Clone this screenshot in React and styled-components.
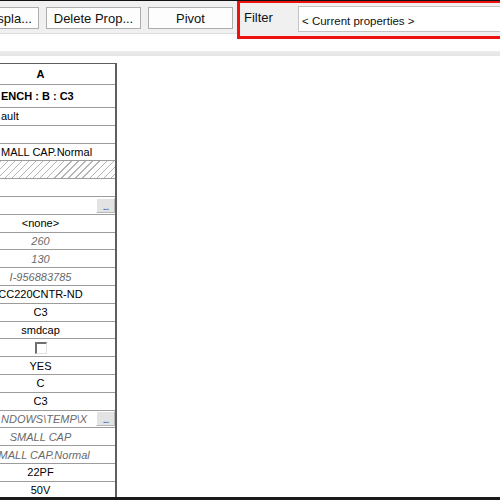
import React from 'react';
import styled, { createGlobalStyle } from 'styled-components';

const GlobalStyle = createGlobalStyle`
  html, body {
    margin: 0;
    padding: 0;
    background: #fff;
    overflow: hidden;
  }
  body {
    font-family: "Liberation Sans", Arial, sans-serif;
  }
`;

const Page = styled.div`
  width: 500px;
  height: 500px;
  box-sizing: border-box;
  border-top: 1px solid #111;
  border-bottom: 3px solid #1a1a1a;
  background: #fff;
  overflow: hidden;
  display: flex;
  flex-direction: column;
`;

const Toolbar = styled.div`
  height: 32px;
  flex-shrink: 0;
  display: flex;
  align-items: flex-start;
  gap: 7px;
  background: #f0f0f0;
  border-bottom: 1px solid #dedede;
`;

const ToolButton = styled.button`
  width: ${(p) => p.$width}px;
  margin-left: ${(p) => p.$offset || 0}px;
  height: 22px;
  margin-top: 6px;
  flex-shrink: 0;
  padding: 0;
  background: #fdfdfd;
  border: 1px solid #adadad;
  font-family: "Liberation Sans", Arial, sans-serif;
  font-size: 13px;
  color: #111;
  white-space: nowrap;
  overflow: hidden;
`;

const FilterGroup = styled.div`
  margin-left: -3px;
  flex: 1;
  height: 38px;
  box-sizing: border-box;
  border: 3px solid #f01010;
  border-right: none;
  border-top-width: 2px;
  background: #f0f0f0;
  display: flex;
  align-items: flex-start;
  padding-left: 4px;
`;

const FilterLabel = styled.span`
  width: 54px;
  flex-shrink: 0;
  padding-top: 7px;
  font-size: 13px;
  color: #111;
`;

const FilterInput = styled.div`
  flex: 1;
  height: 26px;
  margin-top: 3px;
  box-sizing: border-box;
  background: #fff;
  border: 1px solid #c4c4c4;
  border-right: none;
  padding: 8px 0 0 3px;
  font-size: 11.5px;
  color: #111;
  white-space: nowrap;
`;

const Band = styled.div`
  flex-shrink: 0;
  height: 5px;
  margin-top: 17px;
  margin-bottom: 7px;
  background: linear-gradient(#ececec, #e4e4e4);
`;

const SheetClip = styled.div`
  width: 118px;
  overflow: hidden;
  flex: 1;
`;

const Column = styled.div`
  width: 151px;
  margin-left: -34px;
  box-sizing: border-box;
  border-right: 2px solid #5e5e5e;
  border-top: 1px solid #5e5e5e;
  height: 100%;
`;

const Cell = styled.div`
  height: ${(p) => p.$h || 17.8}px;
  box-sizing: border-box;
  border-bottom: 1px solid #9c9c9c;
  display: flex;
  align-items: center;
  justify-content: ${(p) => (p.$left ? 'flex-start' : 'center')};
  padding-left: ${(p) => (p.$left ? 35 : 0)}px;
  font-size: 11px;
  font-weight: ${(p) => (p.$bold ? 'bold' : 'normal')};
  font-style: ${(p) => (p.$dim ? 'italic' : 'normal')};
  color: ${(p) => (p.$dim ? '#6a6a6a' : '#000')};
  white-space: nowrap;
  overflow: hidden;
`;

const Hatched = styled(Cell)`
  background: repeating-linear-gradient(
    135deg,
    #fff 0px,
    #fff 4px,
    #b4b4b4 4px,
    #b4b4b4 5px
  );
`;

const CellText = styled.span`
  flex: 1;
  overflow: hidden;
`;

const Ellipsis = styled.span`
  margin-left: auto;
  width: 19px;
  height: 15px;
  flex-shrink: 0;
  box-sizing: border-box;
  background: #e3e3e3;
  border: 1px solid #b8b8b8;
  border-top-color: #fff;
  border-left-color: #fff;
  font-style: normal;
  font-size: 10px;
  line-height: 16px;
  color: #33337a;
  text-align: center;
  letter-spacing: -1px;
`;

const CheckBox = styled.span`
  width: 12px;
  height: 12px;
  box-sizing: border-box;
  background: #fff;
  border-top: 2px solid #707070;
  border-left: 2px solid #707070;
  border-right: 1px solid #e2e2e2;
  border-bottom: 1px solid #e2e2e2;
`;

const rows = [
  { text: 'A', bold: true, h: 21 },
  { text: 'ENCH : B : C3', bold: true, left: true, h: 23 },
  { text: 'ault', left: true },
  { text: '' },
  { text: 'MALL CAP.Normal', left: true },
  { hatch: true },
  { text: '' },
  { button: true, left: true, text: '' },
  { text: '<none>' },
  { text: '260', dim: true },
  { text: '130', dim: true },
  { text: 'I-956883785', dim: true },
  { text: 'CC220CNTR-ND' },
  { text: 'C3' },
  { text: 'smdcap' },
  { check: true },
  { text: 'YES' },
  { text: 'C' },
  { text: 'C3' },
  { text: 'NDOWS\\TEMP\\X', dim: true, left: true, button: true },
  { text: 'SMALL CAP', dim: true },
  { text: 'SMALL CAP.Normal', dim: true },
  { text: '22PF' },
  { text: '50V' },
];

function Row({ row }) {
  if (row.hatch) return <Hatched />;
  return (
    <Cell $h={row.h} $left={row.left} $bold={row.bold} $dim={row.dim}>
      {row.check ? (
        <CheckBox />
      ) : row.button ? (
        <>
          <CellText>{row.text}</CellText>
          <Ellipsis>...</Ellipsis>
        </>
      ) : (
        row.text
      )}
    </Cell>
  );
}

export default function App() {
  return (
    <>
      <GlobalStyle />
      <Page>
        <Toolbar>
          <ToolButton $width={61} $offset={-22}>Displa...</ToolButton>
          <ToolButton $width={95}>Delete Prop...</ToolButton>
          <ToolButton $width={85}>Pivot</ToolButton>
          <FilterGroup>
            <FilterLabel>Filter</FilterLabel>
            <FilterInput>&lt; Current properties &gt;</FilterInput>
          </FilterGroup>
        </Toolbar>
        <Band />
        <SheetClip>
          <Column>
            {rows.map((row, i) => (
              <Row key={i} row={row} />
            ))}
          </Column>
        </SheetClip>
      </Page>
    </>
  );
}
